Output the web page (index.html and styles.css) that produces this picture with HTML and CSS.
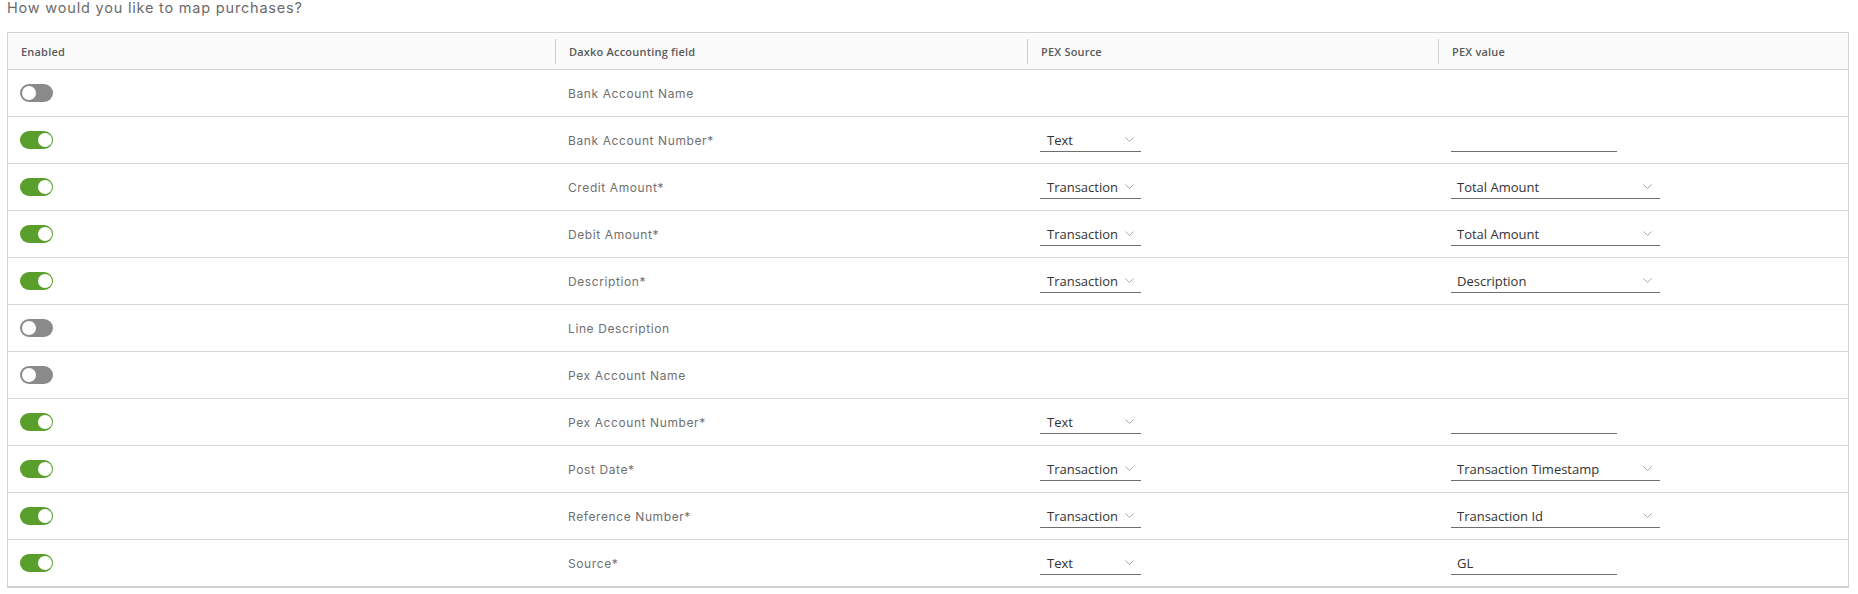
FILE: index.html
```html
<!DOCTYPE html>
<html lang="en">
<head>
<meta charset="utf-8">
<title>Map purchases</title>
<link rel="stylesheet" href="styles.css">
</head>
<body>
<p class="title">How would you like to map purchases?</p>
<div class="table">
  <div class="row head">
    <div class="hcell">Enabled</div>
    <div class="hcell div">Daxko Accounting field</div>
    <div class="hcell div">PEX Source</div>
    <div class="hcell div">PEX value</div>
  </div>

  <div class="row">
    <div class="cell"><span class="toggle"></span></div>
    <div class="cell field">Bank Account Name</div>
    <div class="cell"></div>
    <div class="cell"></div>
  </div>

  <div class="row">
    <div class="cell"><span class="toggle on"></span></div>
    <div class="cell field">Bank Account Number*</div>
    <div class="cell"><div class="select src"><span>Text</span><svg class="chev" width="9" height="6" viewBox="0 0 9 6"><polyline points="0.5,0.5 4.5,4.5 8.5,0.5"/></svg></div></div>
    <div class="cell"><div class="input"></div></div>
  </div>

  <div class="row">
    <div class="cell"><span class="toggle on"></span></div>
    <div class="cell field">Credit Amount*</div>
    <div class="cell"><div class="select src"><span>Transaction</span><svg class="chev" width="9" height="6" viewBox="0 0 9 6"><polyline points="0.5,0.5 4.5,4.5 8.5,0.5"/></svg></div></div>
    <div class="cell"><div class="select val"><span>Total Amount</span><svg class="chev" width="9" height="6" viewBox="0 0 9 6"><polyline points="0.5,0.5 4.5,4.5 8.5,0.5"/></svg></div></div>
  </div>

  <div class="row">
    <div class="cell"><span class="toggle on"></span></div>
    <div class="cell field">Debit Amount*</div>
    <div class="cell"><div class="select src"><span>Transaction</span><svg class="chev" width="9" height="6" viewBox="0 0 9 6"><polyline points="0.5,0.5 4.5,4.5 8.5,0.5"/></svg></div></div>
    <div class="cell"><div class="select val"><span>Total Amount</span><svg class="chev" width="9" height="6" viewBox="0 0 9 6"><polyline points="0.5,0.5 4.5,4.5 8.5,0.5"/></svg></div></div>
  </div>

  <div class="row">
    <div class="cell"><span class="toggle on"></span></div>
    <div class="cell field">Description*</div>
    <div class="cell"><div class="select src"><span>Transaction</span><svg class="chev" width="9" height="6" viewBox="0 0 9 6"><polyline points="0.5,0.5 4.5,4.5 8.5,0.5"/></svg></div></div>
    <div class="cell"><div class="select val"><span>Description</span><svg class="chev" width="9" height="6" viewBox="0 0 9 6"><polyline points="0.5,0.5 4.5,4.5 8.5,0.5"/></svg></div></div>
  </div>

  <div class="row">
    <div class="cell"><span class="toggle"></span></div>
    <div class="cell field">Line Description</div>
    <div class="cell"></div>
    <div class="cell"></div>
  </div>

  <div class="row">
    <div class="cell"><span class="toggle"></span></div>
    <div class="cell field">Pex Account Name</div>
    <div class="cell"></div>
    <div class="cell"></div>
  </div>

  <div class="row">
    <div class="cell"><span class="toggle on"></span></div>
    <div class="cell field">Pex Account Number*</div>
    <div class="cell"><div class="select src"><span>Text</span><svg class="chev" width="9" height="6" viewBox="0 0 9 6"><polyline points="0.5,0.5 4.5,4.5 8.5,0.5"/></svg></div></div>
    <div class="cell"><div class="input"></div></div>
  </div>

  <div class="row">
    <div class="cell"><span class="toggle on"></span></div>
    <div class="cell field">Post Date*</div>
    <div class="cell"><div class="select src"><span>Transaction</span><svg class="chev" width="9" height="6" viewBox="0 0 9 6"><polyline points="0.5,0.5 4.5,4.5 8.5,0.5"/></svg></div></div>
    <div class="cell"><div class="select val"><span>Transaction Timestamp</span><svg class="chev" width="9" height="6" viewBox="0 0 9 6"><polyline points="0.5,0.5 4.5,4.5 8.5,0.5"/></svg></div></div>
  </div>

  <div class="row">
    <div class="cell"><span class="toggle on"></span></div>
    <div class="cell field">Reference Number*</div>
    <div class="cell"><div class="select src"><span>Transaction</span><svg class="chev" width="9" height="6" viewBox="0 0 9 6"><polyline points="0.5,0.5 4.5,4.5 8.5,0.5"/></svg></div></div>
    <div class="cell"><div class="select val"><span>Transaction Id</span><svg class="chev" width="9" height="6" viewBox="0 0 9 6"><polyline points="0.5,0.5 4.5,4.5 8.5,0.5"/></svg></div></div>
  </div>

  <div class="row">
    <div class="cell"><span class="toggle on"></span></div>
    <div class="cell field">Source*</div>
    <div class="cell"><div class="select src"><span>Text</span><svg class="chev" width="9" height="6" viewBox="0 0 9 6"><polyline points="0.5,0.5 4.5,4.5 8.5,0.5"/></svg></div></div>
    <div class="cell"><div class="input">GL</div></div>
  </div>
</div>
</body>
</html>
```

FILE: styles.css
```css
html, body {
  margin: 0;
  padding: 0;
  background: #ffffff;
}

body {
  font-family: "Inter", "Open Sans", sans-serif;
}

.title {
  margin: 0 0 16px 7px;
  height: 16px;
  line-height: 15px;
  font-size: 14.5px;
  letter-spacing: 0.8px;
  color: #6b6b6b;
}

.table {
  width: 1842px;
  margin-left: 7px;
  box-sizing: border-box;
  border: 1px solid #d3d3d3;
  border-bottom: 2px solid #cfcfcf;
  box-shadow: 0 1px 1px rgba(0, 0, 0, 0.06);
}

.row {
  display: grid;
  grid-template-columns: 547px 472px 411px 410px;
  align-items: center;
  height: 46px;
  border-bottom: 1px solid #d6d6d6;
}

.row:last-child {
  border-bottom: none;
}

.row.head {
  height: 36px;
  background: #fafafa;
  border-bottom: 1px solid #d3d3d3;
}

.hcell {
  height: 25px;
  display: flex;
  align-items: center;
  padding-left: 13px;
  font-family: "Open Sans", sans-serif;
  font-weight: 600;
  font-size: 11px;
  letter-spacing: 0.2px;
  color: #5a5a5a;
}

.hcell.div {
  border-left: 1px solid #d0d0d0;
}

.cell {
  display: flex;
  align-items: center;
  height: 46px;
  padding-left: 13px;
}

.cell:first-child {
  padding-left: 12px;
}

.field {
  font-size: 12px;
  letter-spacing: 0.6px;
  color: #707070;
}

.toggle {
  display: flex;
  align-items: center;
  justify-content: flex-start;
  width: 33px;
  height: 18px;
  box-sizing: border-box;
  padding: 0 2px;
  border-radius: 9px;
  background: #8a8a8a;
}

.toggle::after {
  content: "";
  width: 14px;
  height: 14px;
  border-radius: 50%;
  background: #ffffff;
}

.toggle.on {
  background: #5a9f2b;
  justify-content: flex-end;
  padding-right: 1px;
}

.select {
  display: flex;
  align-items: center;
  justify-content: space-between;
  height: 23px;
  margin-top: 1px;
  box-sizing: border-box;
  border-bottom: 1px solid #6e6e6e;
  font-family: "Open Sans", sans-serif;
  font-size: 13px;
  color: #333333;
}

.select.src {
  width: 101px;
  padding: 0 7px 0 7px;
}

.select.val {
  width: 209px;
  padding: 0 8px 0 6px;
}

.chev {
  flex: none;
  fill: none;
  stroke: #a8a8a8;
  stroke-width: 1;
}

.input {
  display: flex;
  align-items: center;
  width: 166px;
  height: 23px;
  margin-top: 1px;
  box-sizing: border-box;
  padding-left: 6px;
  border-bottom: 1px solid #6e6e6e;
  font-family: "Open Sans", sans-serif;
  font-size: 13px;
  color: #333333;
}
```
